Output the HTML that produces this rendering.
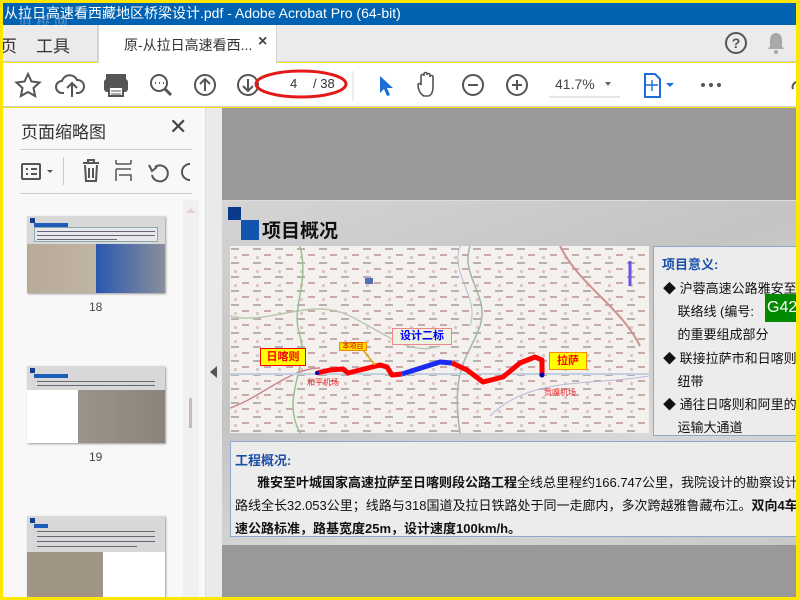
<!DOCTYPE html>
<html><head><meta charset="utf-8"><style>
*{margin:0;padding:0;box-sizing:border-box}
body{width:800px;height:600px;overflow:hidden;position:relative;background:#ffe600;font-family:"Liberation Sans","Noto Sans CJK SC",sans-serif}
.a{position:absolute}
.t{position:absolute;white-space:nowrap}
.ln{position:absolute;height:2px;background:#667}
</style></head><body>
<div class="a" style="left:3px;top:3px;width:793px;height:22px;background:#0062b0"></div>
<div class="t" style="left:4px;top:3px;color:#fff;font-size:14px;line-height:20px">从拉日高速看西藏地区桥梁设计.pdf - Adobe Acrobat Pro (64-bit)</div>
<div class="t" style="left:18px;top:12px;color:rgba(200,200,220,.55);font-size:14px;font-family:'Noto Serif CJK SC',serif;letter-spacing:4px">道桥网</div>
<div class="a" style="left:3px;top:25px;width:793px;height:37px;background:#ebebeb;border-bottom:1px solid #ccc"></div>
<div class="t" style="left:0px;top:32px;font-size:17px;color:#333">页</div>
<div class="a" style="left:20px;top:25px;width:78px;height:37px;border-right:1px solid #d4d4d4"></div>
<div class="t" style="left:36px;top:32px;font-size:17px;color:#333">工具</div>
<div class="a" style="left:98px;top:25px;width:179px;height:38px;background:#fff;border-left:1px solid #d4d4d4;border-right:1px solid #d4d4d4"></div>
<div class="t" style="left:124px;top:35px;font-size:14px;color:#333">原-从拉日高速看西...</div>
<div class="t" style="left:258px;top:33px;font-size:16px;color:#444;font-weight:bold">×</div>
<svg class="a" style="left:724px;top:31px" width="24" height="24"><circle cx="12" cy="12" r="10" fill="none" stroke="#555" stroke-width="2"/><text x="12" y="17" font-size="14" text-anchor="middle" fill="#555" font-family="Liberation Sans" font-weight="bold">?</text></svg>
<svg class="a" style="left:765px;top:31px" width="22" height="24"><path d="M11 2c-4 0-6 3-6 7v6l-2 3h16l-2-3V9c0-4-2-7-6-7z" fill="#a8a8a8"/><circle cx="11" cy="21" r="2" fill="#a8a8a8"/></svg>
<div class="a" style="left:3px;top:63px;width:793px;height:44px;background:#fff;border-bottom:1px solid #ccc"></div>
<svg class="a" style="left:0;top:63px" width="800" height="44" fill="none" stroke="#555" stroke-width="2">
<path d="M28 11l3.5 7.5 8 1-6 5.5 1.6 8-7.1-4-7.1 4 1.6-8-6-5.5 8-1z"/>
<path d="M64 30h-2a6 6 0 010-12 8 8 0 0115-1 6 6 0 011 13h-2M72 34V21M67 25l5-5 5 5"/>
<rect x="107" y="12" width="18" height="6" fill="#555"/><rect x="105" y="17" width="22" height="11" rx="2" fill="#555"/><rect x="109" y="24" width="14" height="9" fill="#fff"/><path d="M111 28h10M111 31h10" stroke-width="1"/>
<circle cx="159" cy="20" r="8"/><path d="M165 26l6 6" stroke-width="3"/><path d="M155 20h1M159 20h1M163 20h1" stroke-width="2"/>
<circle cx="205" cy="22" r="10"/><path d="M205 28V16M200 21l5-5 5 5"/>
<circle cx="248" cy="22" r="10"/><path d="M248 16v12M243 23l5 5 5-5"/>
<path d="M380 13v17l4-4 3 7 3-1-3-7h6z" fill="#1c6ed6" stroke="none"/>
<path d="M424 33c-4-2-6-7-6-11 0-2 2-2 3 0v-9c0-2 3-2 3 0v-2c0-2 3-2 3 0v1c0-2 3-2 3 0v2c0-2 3-2 3 0v10c0 5-2 9-5 9z" stroke-width="1.6"/>
<circle cx="473" cy="22" r="10"/><path d="M468 22h10"/>
<circle cx="517" cy="22" r="10"/><path d="M512 22h10M517 17v10"/>
<path d="M549 34h71" stroke="#ccc" stroke-width="1"/>
<path d="M605 19h6l-3 4z" fill="#666" stroke="none"/>
<path d="M645 11h10l5 5v18h-15z" stroke="#1c6ed6"/><path d="M652 17v11M646 22h12" stroke="#1c6ed6" stroke-width="1.4"/>
<path d="M666 20h8l-4 4z" fill="#1c6ed6" stroke="none"/>
<circle cx="703" cy="22" r="2" fill="#555" stroke="none"/><circle cx="711" cy="22" r="2" fill="#555" stroke="none"/><circle cx="719" cy="22" r="2" fill="#555" stroke="none"/>
<path d="M798 19a5 5 0 00-5 7" />
<path d="M353 8v30" stroke="#ddd" stroke-width="1"/>
</svg>
<div class="t" style="left:555px;top:76px;font-size:14px;color:#444">41.7%</div>
<div class="t" style="left:290px;top:76px;font-size:13px;color:#333">4</div>
<div class="t" style="left:313px;top:76px;font-size:13px;color:#333">/ 38</div>
<svg class="a" style="left:252px;top:66px" width="100" height="36"><ellipse cx="49" cy="18" rx="45" ry="13" fill="none" stroke="#e21a1a" stroke-width="3"/></svg>
<div class="a" style="left:3px;top:108px;width:202px;height:489px;background:#f8f8f8"></div>
<div class="t" style="left:21px;top:118px;font-size:17px;color:#333">页面缩略图</div>
<div class="t" style="left:169px;top:114px;font-size:22px;color:#444">✕</div>
<div class="a" style="left:20px;top:149px;width:172px;height:1px;background:#ccc"></div>
<div class="a" style="left:20px;top:193px;width:172px;height:1px;background:#ccc"></div>
<div class="a" style="left:63px;top:157px;width:1px;height:28px;background:#ccc"></div>
<svg class="a" style="left:15px;top:155px" width="180" height="34" fill="none" stroke="#555" stroke-width="2">
<rect x="7" y="9" width="18" height="15" rx="1"/><path d="M11 14h2M16 14h6M11 19h2M16 19h6"/>
<path d="M32 15h6l-3 3z" fill="#555" stroke="none"/>
<path d="M68 8h16M73 8V5h6v3M70 10l1 16h10l1-16M74 13v10M78 13v10"/>
<path d="M101 5v4M116 5v4M101 9h15M101 14h15M101 14v12M104 20h12v6" stroke-width="1.5"/>
<path d="M140 12a8 8 0 11-3 8" /><path d="M134 10l3 6 5-4" fill="none"/>
<path d="M175 9a8 8 0 000 16"/>
</svg>
<div class="a" style="left:183px;top:200px;width:16px;height:397px;background:#f0f0f0"></div>
<div class="a" style="left:189px;top:398px;width:3px;height:30px;background:#c8b8c0"></div>
<svg class="a" style="left:185px;top:206px" width="12" height="8"><path d="M1 7l5-5 5 5z" fill="#e8d0d8"/></svg>
<!-- thumbnails -->
<div class="a" style="left:27px;top:216px;width:138px;height:77px;background:linear-gradient(90deg,#b8aa98 0,#c0b4a4 50%,#2a58b0 50%,#8a8f9a 100%);box-shadow:1px 1px 2px #999"></div>
<div class="a" style="left:27px;top:216px;width:138px;height:28px;background:#d8d8d8"></div>
<div class="a" style="left:34px;top:227px;width:124px;height:15px;background:#e8e8ec;border:1px solid #8aa"></div>
<div class="a" style="left:34px;top:223px;width:34px;height:4px;background:#1d5cb8"></div>
<div class="ln" style="left:37px;top:231px;width:118px;height:1px"></div><div class="ln" style="left:37px;top:235px;width:118px;height:1px"></div><div class="ln" style="left:37px;top:239px;width:80px;height:1px"></div>
<div class="a" style="left:30px;top:218px;width:5px;height:5px;background:#123f8f"></div>
<div class="t" style="left:89px;top:300px;font-size:12px;color:#444">18</div>
<div class="a" style="left:27px;top:366px;width:138px;height:77px;background:linear-gradient(90deg,#fff 0,#fff 37%,#9a948a 37%,#8a847a 100%);box-shadow:1px 1px 2px #999"></div>
<div class="a" style="left:27px;top:366px;width:138px;height:24px;background:#d8d8d8"></div>
<div class="a" style="left:34px;top:374px;width:34px;height:4px;background:#1d5cb8"></div>
<div class="ln" style="left:37px;top:381px;width:118px;height:1px"></div><div class="ln" style="left:37px;top:385px;width:118px;height:1px"></div>
<div class="a" style="left:30px;top:368px;width:5px;height:5px;background:#123f8f"></div>
<div class="t" style="left:89px;top:450px;font-size:12px;color:#444">19</div>
<div class="a" style="left:27px;top:516px;width:138px;height:81px;background:linear-gradient(90deg,#a09484 0,#a09484 55%,#fff 55%);box-shadow:1px 1px 2px #999"></div>
<div class="a" style="left:27px;top:516px;width:138px;height:36px;background:#d8d8d8"></div>
<div class="a" style="left:34px;top:524px;width:14px;height:4px;background:#1d5cb8"></div>
<div class="ln" style="left:37px;top:531px;width:118px;height:1px"></div><div class="ln" style="left:37px;top:536px;width:118px;height:1px"></div><div class="ln" style="left:37px;top:541px;width:118px;height:1px"></div><div class="ln" style="left:37px;top:546px;width:100px;height:1px"></div>
<div class="a" style="left:30px;top:518px;width:5px;height:5px;background:#123f8f"></div>
<div class="a" style="left:205px;top:108px;width:17px;height:489px;background:#eaeaea;border-left:1px solid #ddd"></div>
<svg class="a" style="left:210px;top:366px" width="8" height="12"><path d="M7 0v12L0 6z" fill="#555"/></svg>
<div class="a" style="left:222px;top:108px;width:574px;height:489px;background:#999"></div>
<div class="a" style="left:222px;top:200px;width:574px;height:345px;background:linear-gradient(160deg,#d4d4d4 0,#c4c4c4 40%,#d8d8d8 70%,#c8c8c8 100%);border-top:1px solid #ddd"></div>
<div class="a" style="left:228px;top:207px;width:13px;height:13px;background:#0b3a8c"></div>
<div class="a" style="left:241px;top:220px;width:18px;height:20px;background:#1155b0"></div>
<div class="t" style="left:262px;top:216px;font-size:19px;font-weight:bold;color:#111">项目概况</div>
<div class="a" style="left:230px;top:246px;width:419px;height:187px;background:#f4f0ee;overflow:hidden">
<svg width="419" height="187" style="position:absolute;left:0;top:0">
<defs><pattern id="p" width="22" height="14" patternUnits="userSpaceOnUse">
<rect x="1" y="2" width="8" height="2" fill="#b8b0b0"/><rect x="12" y="8" width="7" height="2" fill="#c8a8a8"/><rect x="4" y="10" width="3" height="3" fill="#d8c8c8"/></pattern></defs>
<rect width="419" height="187" fill="url(#p)"/>
<path d="M0 70c40 10 80-20 120 0s60 40 90 30" stroke="#b9c8b0" stroke-width="1.5" fill="none"/>
<path d="M70 0c10 40-10 60 0 90s-20 60 0 97" stroke="#9ac090" stroke-width="1.5" fill="none"/>
<path d="M240 0c-10 30 20 50 10 80s-30 40-20 107" stroke="#a0b8a0" stroke-width="1.5" fill="none"/>
<path d="M230 0c-10 30 20 50 10 80" stroke="#b0c0d0" fill="none"/>
<path d="M330 0c20 40 60 60 80 100" stroke="#d09090" stroke-width="2" fill="none"/>
<path d="M0 162c30-10 60-40 90-40" stroke="#c88" stroke-width="1.5" fill="none"/>
<path d="M260 170c40-40 100-30 159-40" stroke="#b9b9d9" fill="none"/>
<path d="M0 128h419" stroke="#c0d0e0" stroke-width="2" fill="none"/>
<path d="M87 127L100 124 113 123 118 127 150 119 157 121 162 129 172 128" stroke="#f00" stroke-width="5" fill="none" stroke-linejoin="round"/>
<path d="M172 128L210 116 222 117" stroke="#1a2cf0" stroke-width="5" fill="none" stroke-linejoin="round"/>
<path d="M222 117L237 124 253 136 273 131 290 117 305 111 312 114 312 129" stroke="#f00" stroke-width="5" fill="none" stroke-linejoin="round"/>
<path d="M133 104l12 15" stroke="#e0a000" stroke-width="1.5"/>
<circle cx="87" cy="127" r="2" fill="#00a"/><circle cx="312" cy="129" r="2.5" fill="#00a"/>
<path d="M400 15v25" stroke="#7050e0" stroke-width="3"/>
<rect x="135" y="32" width="8" height="6" fill="#5070b0"/>
</svg>
<div class="t" style="left:30px;top:102px;width:46px;height:18px;background:#ff0;border:1px solid #f00;color:#f00;font-size:11px;font-weight:bold;text-align:center;line-height:16px">日喀则</div>
<div class="t" style="left:162px;top:82px;width:60px;height:17px;background:#eef0e0;border:1px solid #e88;color:#00f;font-size:11px;font-weight:bold;text-align:center;line-height:15px">设计二标</div>
<div class="t" style="left:109px;top:96px;width:28px;height:9px;background:#fd0;border:1px solid #e80;color:#c00;font-size:7px;text-align:center;line-height:8px">本项目</div>
<div class="t" style="left:319px;top:106px;width:38px;height:18px;background:#ff0;border:1px solid #f80;color:#f00;font-size:11px;font-weight:bold;text-align:center;line-height:16px">拉萨</div>
<div class="t" style="left:77px;top:131px;color:#e22;font-size:8px">和平机场</div>
<div class="t" style="left:314px;top:141px;color:#e22;font-size:8px">贡嘎机场</div>
</div>
<div class="a" style="left:653px;top:246px;width:150px;height:190px;background:#ececec;border:1px solid #8ea7d0"></div>
<div class="t" style="left:662px;top:254px;font-size:13px;font-weight:bold;color:#1a4fa8">项目意义:</div>
<div class="t" style="left:663px;top:277px;font-size:13px;color:#111;line-height:23.2px">◆ 沪蓉高速公路雅安至<br>&nbsp;&nbsp;&nbsp; 联络线 (编号: <br>&nbsp;&nbsp;&nbsp; 的重要组成部分<br>◆ 联接拉萨市和日喀则<br>&nbsp;&nbsp;&nbsp; 纽带<br>◆ 通往日喀则和阿里的<br>&nbsp;&nbsp;&nbsp; 运输大通道</div>
<div class="t" style="left:765px;top:294px;width:32px;height:28px;background:#008a00;color:#fff;font-size:16px;line-height:28px;padding-left:2px">G42</div>
<div class="a" style="left:230px;top:441px;width:570px;height:96px;background:#ececec;border:1px solid #8ea7d0"></div>
<div class="t" style="left:235px;top:450px;font-size:13px;font-weight:bold;color:#1a4fa8">工程概况:</div>
<div class="t" style="left:235px;top:471px;font-size:13px;color:#111;line-height:23px"><span style="padding-left:22px;font-weight:bold">雅安至叶城国家高速拉萨至日喀则段公路工程</span>全线总里程约166.747公里，我院设计的勘察设计<br>路线全长32.053公里；线路与318国道及拉日铁路处于同一走廊内，多次跨越雅鲁藏布江。<b>双向4车</b><br><b>速公路标准，路基宽度25m，设计速度100km/h。</b></div>
<div class="a" style="left:0;top:0;width:800px;height:3px;background:#ffe600"></div>
<div class="a" style="left:0;top:0;width:3px;height:600px;background:#ffe600"></div>
<div class="a" style="left:796px;top:0;width:4px;height:600px;background:#ffe600"></div>
<div class="a" style="left:0;top:597px;width:800px;height:3px;background:#ffe600"></div>
</body></html>
